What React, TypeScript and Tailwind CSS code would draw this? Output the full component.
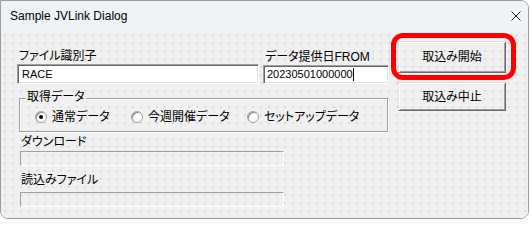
import React from "react";

const font = "font-['Liberation_Sans','Noto_Sans_CJK_JP',sans-serif] [font-feature-settings:'palt']";

function Radio({ checked, label, w }: { checked?: boolean; label: string; w?: string }) {
  return (
    <div className={`flex items-center ${w ?? ""}`}>
      <div className="w-[12px] h-[12px] rounded-full bg-white border border-[#a0a0a0] shadow-[inset_1px_1px_0_#8a8a8a] flex items-center justify-center shrink-0">
        {checked && <div className="w-[4px] h-[4px] rounded-full bg-black" />}
      </div>
      <span className="ml-[5px] text-[12px] leading-[14px] text-black whitespace-nowrap">{label}</span>
    </div>
  );
}

export default function App() {
  return (
    <div className={`w-[531px] h-[220px] bg-white ${font}`}>
      <div className="w-[529px] h-[219px] border border-[#9c9c9c] rounded-tr-[8px] rounded-b-[8px] overflow-hidden flex flex-col">
        <div className="h-[30px] shrink-0 bg-[#eff3f8] flex items-center justify-between pl-[9px] pr-[7px]">
          <span className="text-[12px] text-black font-['Liberation_Sans',sans-serif]">Sample JVLink Dialog</span>
          <svg width="10" height="10" viewBox="0 0 10 10">
            <path d="M0.5 0.5 L9.5 9.5 M9.5 0.5 L0.5 9.5" stroke="#1a1a1a" strokeWidth="1" fill="none" />
          </svg>
        </div>
        <div className="flex-1 bg-[#f0f0f0] bg-[radial-gradient(circle_at_4px_4px,#dadada_0.7px,transparent_1px)] bg-[length:8px_8px] flex pl-[16px] text-black">
          <div className="w-[372px] flex flex-col pt-[19px]">
            <div className="flex items-end">
              <div className="w-[242px] flex flex-col">
                <div className="h-[13px] leading-[13px] text-[12px] pl-[2px] mb-[1px]">ファイル識別子</div>
                <div className="h-[20px] bg-white border border-t-[#a0a0a0] border-l-[#a0a0a0] border-r-white border-b-white shadow-[inset_1px_1px_0_#696969,inset_-1px_-1px_0_#e3e3e3] flex items-center pl-[4px] text-[11px]">
                  RACE
                </div>
              </div>
              <div className="w-[126px] ml-[4px] flex flex-col">
                <div className="h-[13px] leading-[13px] text-[12px] pl-[2px] mb-[1px]">データ提供日FROM</div>
                <div className="h-[19px] bg-white border border-t-[#a0a0a0] border-l-[#a0a0a0] border-r-white border-b-white shadow-[inset_1px_1px_0_#696969,inset_-1px_-1px_0_#e3e3e3] flex items-center pl-[3px] text-[11px]">
                  <span>20230501000000</span>
                  <span className="w-[1px] h-[13px] bg-black" />
                </div>
              </div>
            </div>
            <div className="relative mt-[14px] ml-[2px] w-[369px] h-[34px] border border-[#a0a0a0] shadow-[inset_1px_1px_0_#fff,1px_1px_0_#fff] flex items-center pt-[3px] pl-[15px]">
              <span className="absolute left-[6px] top-[-8px] px-[1px] bg-[#f0f0f0] text-[12px] leading-[13px]">取得データ</span>
              <Radio checked label="通常データ" w="w-[96px]" />
              <Radio label="今週開催データ" w="w-[116px]" />
              <Radio label="セットアップデータ" />
            </div>
            <div className="mt-[4px] ml-[4px] h-[13px] leading-[13px] text-[12px]">ダウンロード</div>
            <div className="mt-[2px] ml-[3px] w-[264px] h-[15px] border border-t-[#a0a0a0] border-l-[#a0a0a0] border-r-white border-b-white" />
            <div className="mt-[8px] ml-[4px] h-[13px] leading-[13px] text-[12px]">読込みファイル</div>
            <div className="mt-[5px] ml-[3px] w-[264px] h-[15px] border border-t-[#a0a0a0] border-l-[#a0a0a0] border-r-white border-b-white" />
          </div>
          <div className="ml-[9px] pt-[10px] flex flex-col">
            <div className="relative">
              <div className="w-[108px] h-[32px] border border-t-[#e3e3e3] border-l-[#e3e3e3] border-r-[#696969] border-b-[#696969] shadow-[inset_1px_1px_0_#fff,inset_-1px_-1px_0_#a0a0a0] flex items-center justify-center text-[12px]">
                取込み開始
              </div>
              <div className="absolute left-[-7px] top-[-8px] right-[-10px] bottom-[-7px] border-[5px] border-[#ff0000] rounded-[12px]" />
            </div>
            <div className="mt-[9px] w-[108px] h-[29px] border border-t-[#e3e3e3] border-l-[#e3e3e3] border-r-[#696969] border-b-[#696969] shadow-[inset_1px_1px_0_#fff,inset_-1px_-1px_0_#a0a0a0] flex items-center justify-center text-[12px]">
              取込み中止
            </div>
          </div>
        </div>
      </div>
    </div>
  );
}
